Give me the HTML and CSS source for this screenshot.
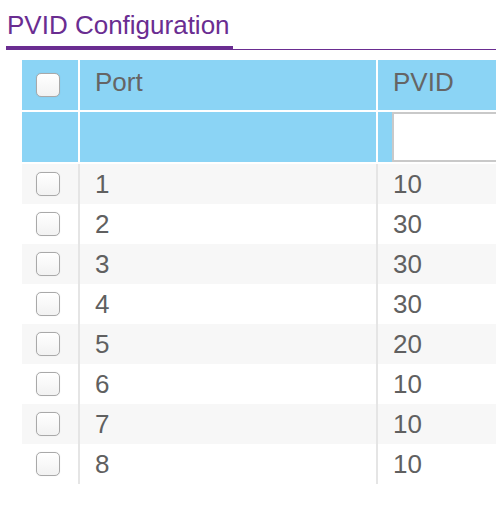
FILE: index.html
```html
<!DOCTYPE html>
<html>
<head>
<meta charset="utf-8">
<link rel="stylesheet" href="styles.css">
</head>
<body>
<div class="page">
  <div class="section-head">
    <h1 class="section-title">PVID Configuration</h1>
  </div>
  <div class="table-wrap">
    <table class="grid">
      <thead>
        <tr class="head-row">
          <th class="col-check"><span class="cb"></span></th>
          <th class="col-port">Port</th>
          <th class="col-pvid">PVID</th>
        </tr>
        <tr class="filter-row">
          <th class="col-check"></th>
          <th class="col-port"></th>
          <th class="col-pvid"><input class="filter-input" type="text"></th>
        </tr>
      </thead>
      <tbody>
        <tr><td class="col-check"><span class="cb"></span></td><td class="col-port">1</td><td class="col-pvid">10</td></tr>
        <tr><td class="col-check"><span class="cb"></span></td><td class="col-port">2</td><td class="col-pvid">30</td></tr>
        <tr><td class="col-check"><span class="cb"></span></td><td class="col-port">3</td><td class="col-pvid">30</td></tr>
        <tr><td class="col-check"><span class="cb"></span></td><td class="col-port">4</td><td class="col-pvid">30</td></tr>
        <tr><td class="col-check"><span class="cb"></span></td><td class="col-port">5</td><td class="col-pvid">20</td></tr>
        <tr><td class="col-check"><span class="cb"></span></td><td class="col-port">6</td><td class="col-pvid">10</td></tr>
        <tr><td class="col-check"><span class="cb"></span></td><td class="col-port">7</td><td class="col-pvid">10</td></tr>
        <tr><td class="col-check"><span class="cb"></span></td><td class="col-port">8</td><td class="col-pvid">10</td></tr>
      </tbody>
    </table>
  </div>
</div>
</body>
</html>
```
FILE: styles.css
```css
html, body {
  margin: 0;
  padding: 0;
  background: #ffffff;
  overflow: hidden;
}

body {
  font-family: "Liberation Sans", Arial, sans-serif;
  width: 496px;
  height: 512px;
}

.page {
  width: 496px;
  overflow: hidden;
}

.section-head {
  margin-left: 6px;
  border-bottom: 1px solid #6a2d91;
  display: flex;
}

.section-title {
  margin: 10px 0 -1px 0;
  padding: 0 3px 6px 1px;
  font-size: 26px;
  line-height: 30px;
  font-weight: normal;
  color: #6a2d91;
  border-bottom: 4px solid #6a2d91;
}

.table-wrap {
  margin: 10px 0 0 22px;
  width: 474px;
  overflow: hidden;
}

.grid {
  border-collapse: separate;
  border-spacing: 0;
  table-layout: fixed;
  width: 656px;
  font-size: 26px;
  color: #606060;
}

.grid th,
.grid td {
  padding: 0;
  text-align: left;
  font-weight: normal;
  white-space: nowrap;
}

.grid .col-check { width: 42px; padding-left: 14px; }
.grid .col-port { width: 281px; padding-left: 15px; }
.grid .col-pvid { width: 300px; padding-left: 15px; }

.head-row th,
.filter-row th {
  background: #8bd4f5;
  border-right: 2px solid #ffffff;
  border-bottom: 2px solid #ffffff;
}

.head-row th {
  height: 44px;
  padding-bottom: 6px;
  vertical-align: middle;
  color: #656565;
}

.head-row th.col-check {
  padding-top: 3px;
  padding-bottom: 3px;
}

.filter-row th {
  height: 50px;
  vertical-align: top;
}

.grid .filter-row th.col-pvid {
  padding-left: 14px;
}

.filter-input {
  display: block;
  box-sizing: border-box;
  width: 290px;
  height: 50px;
  margin: 0;
  border: 2px solid #c9c9c9;
  background: #ffffff;
  padding: 0 8px;
  font: inherit;
  outline: none;
}

.grid tbody td {
  height: 40px;
  vertical-align: middle;
  border-right: 2px solid #e5e5e5;
}

.grid tbody td.col-pvid {
  border-right: none;
}

.grid tbody tr:nth-child(odd) td {
  background: #f7f7f7;
}

.grid tbody tr:nth-child(even) td {
  background: #ffffff;
}

.cb {
  display: block;
  box-sizing: border-box;
  width: 24px;
  height: 24px;
  border: 1px solid #a9a9a9;
  border-radius: 5px;
  background: linear-gradient(#ffffff, #f2f2f2);
  box-shadow: inset 0 1px 1px rgba(255,255,255,0.9), 0 0 1px rgba(0,0,0,0.15);
}
```
